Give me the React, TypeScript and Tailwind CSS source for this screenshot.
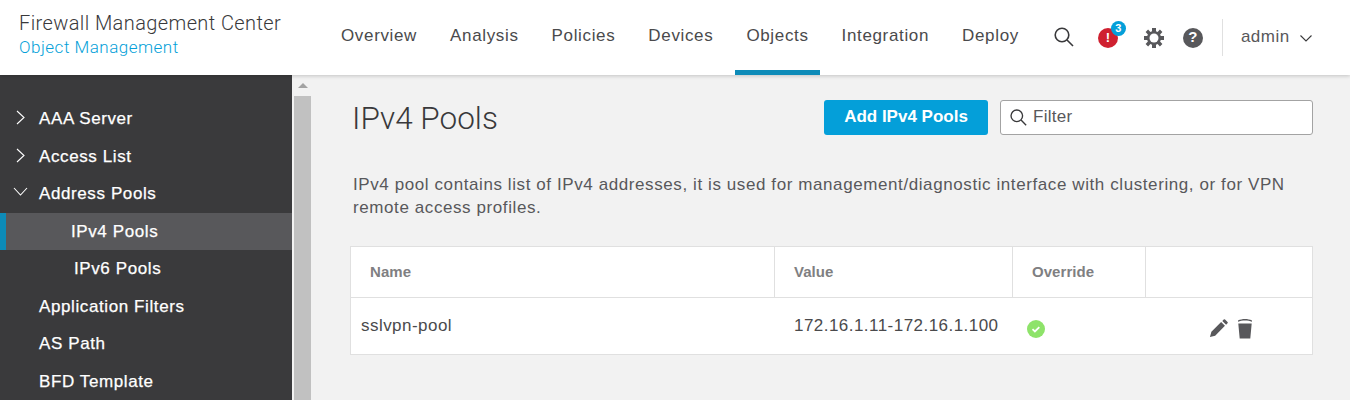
import React from 'react';

const navItems = ['Overview', 'Analysis', 'Policies', 'Devices', 'Objects', 'Integration', 'Deploy'];

const sideItems = [
  { label: 'AAA Server', arrow: 'right' },
  { label: 'Access List', arrow: 'right' },
  { label: 'Address Pools', arrow: 'down' },
  { label: 'IPv4 Pools', child: true, active: true },
  { label: 'IPv6 Pools', child: true },
  { label: 'Application Filters' },
  { label: 'AS Path' },
  { label: 'BFD Template' },
];

const Gear = () => (
  <svg width="22" height="22" viewBox="0 0 22 22" fill="#58585b">
    <path d="M9 1h4v3.200l1.600.7 2.300-2.300 2.500 2.500-2.300 2.300.7 1.600H21v4h-3.200l-.7 1.600 2.300 2.300-2.500 2.500-2.300-2.300-1.600.7V21H9v-3.200l-1.600-.7-2.300 2.300-2.500-2.500 2.300-2.300-.7-1.600H1V9h3.200l.7-1.600-2.300-2.300 2.500-2.500 2.300 2.300L9 4.200z" />
    <circle cx="11" cy="11" r="4.500" fill="#fff" />
  </svg>
);

const Magnifier = ({ size, className }: { size: number; className?: string }) => (
  <svg width={size} height={size} viewBox="0 0 20 20" fill="none" stroke="#39393b" strokeWidth="1.600" className={className}>
    <circle cx="8" cy="8" r="6.800" />
    <path d="M13 13l6 6" />
  </svg>
);

const App = () => {
  return (
    <div className="w-[1350px] h-[400px] overflow-hidden bg-[#f2f2f2] font-['Liberation_Sans',sans-serif] flex flex-col">
      <header className="relative z-10 h-[75px] shrink-0 bg-white shadow-[0_1px_4px_rgba(0,0,0,0.2)] flex items-stretch">
        <div className="w-[330px] pl-[19px] pt-[11px] font-['Roboto',sans-serif]">
          <div className="text-[20px] leading-[25px] font-light text-[#39393b] tracking-[0.4px]">Firewall Management Center</div>
          <div className="text-[17px] leading-[23px] font-light text-[#049fd9] tracking-[0.5px]">Object Management</div>
        </div>
        <nav className="flex items-stretch">
          {navItems.map((item) => (
            <div
              key={item}
              className={`px-[11px] mr-[11px] pt-[24px] text-[17px] leading-[24px] tracking-[0.65px] text-[#4a4a4c] border-b-[5px] ${
                item === 'Objects' ? 'border-[#0d8bb8]' : 'border-transparent'
              }`}
            >
              {item}
            </div>
          ))}
        </nav>
        <div className="flex items-center ml-[13px] pb-[1px]">
          <Magnifier size={20} className="mr-[24px]" />
          <div className="relative w-[20px] h-[20px] rounded-full bg-[#cf2030] text-white text-[13px] font-bold flex items-center justify-center mr-[25px] mt-[1px]">
            !
            <span className="absolute -top-[7px] -right-[8px] w-[15px] h-[15px] rounded-full bg-[#049fd9] text-white text-[11px] font-bold flex items-center justify-center">3</span>
          </div>
          <div className="mr-[18px] mt-[1px]"><Gear /></div>
          <div className="w-[20px] h-[20px] mt-[1px] rounded-full bg-[#58585b] text-white text-[15px] font-bold flex items-center justify-center mr-[19px]">?</div>
          <div className="w-px h-[37px] bg-[#e0e0e0] mr-[18px]" />
          <span className="text-[17px] text-[#58585b] tracking-[0.5px] mr-[10px]">admin</span>
          <svg width="12" height="7" viewBox="0 0 12 7" fill="none" stroke="#39393b" strokeWidth="1.100" className="mt-[2px]">
            <path d="M.5.500L6 6l5.500-5.500" />
          </svg>
        </div>
      </header>

      <div className="flex flex-1 min-h-0">
        <aside className="w-[292px] shrink-0 bg-[#3a3a3c] pt-[25px] overflow-hidden">
          {sideItems.map((item) => (
            <div
              key={item.label}
              className={`relative h-[37.500px] flex items-center text-[17px] tracking-[0.6px] text-white [-webkit-text-stroke:0.25px_white] ${
                item.active ? 'bg-[#58585b]' : ''
              } ${item.child ? (item.active ? 'pl-[71px]' : 'pl-[74px]') : 'pl-[39px]'}`}
            >
              {item.active && <span className="absolute left-0 top-0 bottom-0 w-[6px] bg-[#0d8bb8]" />}
              {item.arrow === 'right' && (
                <svg width="9" height="15" viewBox="0 0 9 15" fill="none" stroke="#fff" strokeWidth="1.100" className="absolute left-[16px] mb-[2px]">
                  <path d="M1 1l7 6.500L1 14" />
                </svg>
              )}
              {item.arrow === 'down' && (
                <svg width="15" height="9" viewBox="0 0 15 9" fill="none" stroke="#fff" strokeWidth="1.100" className="absolute left-[13px] mb-[4px]">
                  <path d="M1 1l6.500 7L14 1" />
                </svg>
              )}
              {item.label}
            </div>
          ))}
        </aside>

        <div className="w-[19px] shrink-0 flex flex-col items-end">
          <div className="w-[17px] h-[21px] flex items-center justify-center">
            <span className="w-0 h-0 border-x-[5px] border-x-transparent border-b-[5px] border-b-[#a3a3a3]" />
          </div>
          <div className="w-[17px] flex-1 bg-[#c1c1c1]" />
        </div>

        <main className="flex-1 pl-[39px] pr-[37px]">
          <div className="flex items-center h-[35px] mt-[25px]">
            <h1 className="ml-[2px] pt-[2px] text-[31.500px] text-[#39393b] font-['Roboto',sans-serif] font-light flex-1">IPv4 Pools</h1>
            <button className="w-[164px] h-[35px] rounded-[3px] bg-[#049fd9] text-white text-[17px] font-bold mr-[12px] pb-[2px]">Add IPv4 Pools</button>
            <div className="w-[313px] h-[35px] rounded-[3px] border border-[#a3a3a3] bg-white flex items-center pl-[9px] text-[17px] tracking-[0.3px] text-[#58585b] pb-[2px]">
              <Magnifier size={17} className="mr-[6px] mt-[2px]" />
              Filter
            </div>
          </div>
          <p className="ml-[3px] mt-[38px] text-[17px] leading-[23px] text-[#58585b] tracking-[0.59px]">
            IPv4 pool contains list of IPv4 addresses, it is used for management/diagnostic interface with clustering, or for VPN remote access profiles.
          </p>
          <div className="mt-[27px] bg-white border border-[#e0e0e0] text-[17px] tracking-[0.46px] text-[#4a4a4c]">
            <div className="flex h-[51px] border-b border-[#e0e0e0] text-[15px] tracking-[0.05px] font-bold text-[#7f7f82]">
              <div className="w-[424px] border-r border-[#e0e0e0] pl-[19px] flex items-center">Name</div>
              <div className="w-[238px] border-r border-[#e0e0e0] pl-[19px] flex items-center">Value</div>
              <div className="w-[133px] border-r border-[#e0e0e0] pl-[19px] flex items-center">Override</div>
            </div>
            <div className="flex h-[56px]">
              <div className="w-[424px] pl-[10px] flex items-center">sslvpn-pool</div>
              <div className="w-[238px] pl-[19px] flex items-center">172.16.1.11-172.16.1.100</div>
              <div className="w-[133px] pl-[14px] flex items-center pt-[5px]">
                <svg width="18" height="18" viewBox="0 0 18 18">
                  <circle cx="9" cy="9" r="9" fill="#8ee36a" />
                  <path d="M5.500 9.200l2.400 2.200 4.400-4.200" fill="none" stroke="#fff" strokeWidth="1.800" />
                </svg>
              </div>
              <div className="flex-1 flex items-center pl-[63px] gap-[9px] pt-[5px]">
                <svg width="19" height="19" viewBox="0 0 20 20" fill="#58585b">
                  <path d="M1 19l1.500-5.500L12.800 3.200l4 4L6.500 17.500zM14 2l1.500-1.500a1 1 0 0 1 1.400 0l2.600 2.600a1 1 0 0 1 0 1.400L18 6z" />
                </svg>
                <svg width="16" height="21" viewBox="0 0 16 21" fill="#58585b">
                  <path d="M1 2.500C5 .5 11 .5 15 2.500v1.300C11 2 5 2 1 3.800z" />
                  <path d="M1.300 5.500h13.400l-1.400 15H2.700z" />
                </svg>
              </div>
            </div>
          </div>
        </main>
      </div>
    </div>
  );
};

export default App;
